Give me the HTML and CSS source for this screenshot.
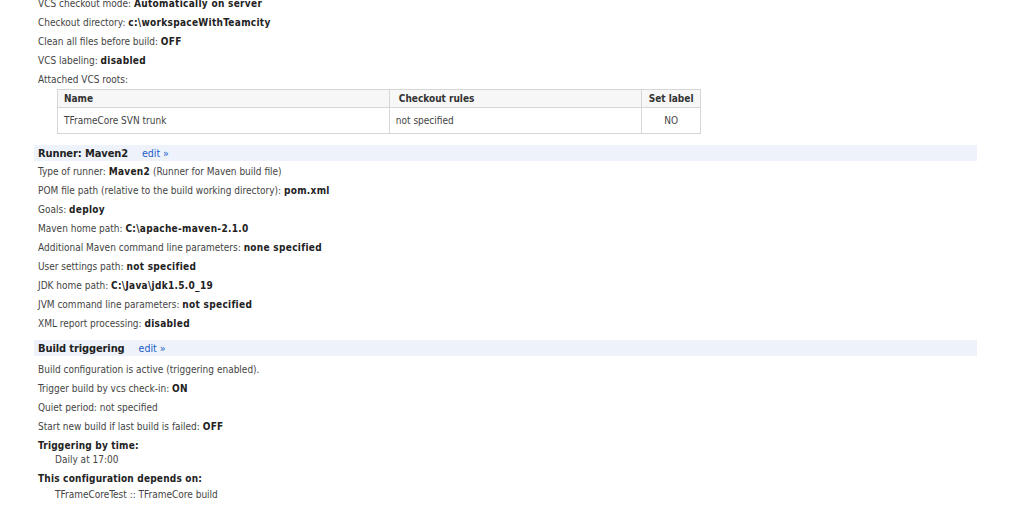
FILE: index.html
```html
<!DOCTYPE html>
<html>
<head>
<meta charset="utf-8">
<link rel="stylesheet" href="styles.css">
</head>
<body>
<div class="page">
  <div class="line">VCS checkout mode: <b>Automatically on server</b></div>
  <div class="line">Checkout directory: <b>c:\workspaceWithTeamcity</b></div>
  <div class="line">Clean all files before build: <b>OFF</b></div>
  <div class="line">VCS labeling: <b>disabled</b></div>
  <div class="line">Attached VCS roots:</div>
  <table class="roots">
    <thead>
      <tr><th class="c-name">Name</th><th class="c-rules">Checkout rules</th><th class="c-label">Set label</th></tr>
    </thead>
    <tbody>
      <tr><td>TFrameCore SVN trunk</td><td>not specified</td><td class="center">NO</td></tr>
    </tbody>
  </table>

  <div class="section runner">
    <span class="title">Runner: Maven2</span><a class="edit" href="#">edit »</a>
  </div>
  <div class="line">Type of runner: <b>Maven2</b> (Runner for Maven build file)</div>
  <div class="line">POM file path (relative to the build working directory): <b>pom.xml</b></div>
  <div class="line">Goals: <b>deploy</b></div>
  <div class="line">Maven home path: <b>C:\apache-maven-2.1.0</b></div>
  <div class="line">Additional Maven command line parameters: <b>none specified</b></div>
  <div class="line">User settings path: <b>not specified</b></div>
  <div class="line">JDK home path: <b>C:\Java\jdk1.5.0_19</b></div>
  <div class="line">JVM command line parameters: <b>not specified</b></div>
  <div class="line">XML report processing: <b>disabled</b></div>

  <div class="section triggering">
    <span class="title">Build triggering</span><a class="edit" href="#">edit »</a>
  </div>
  <div class="line">Build configuration is active (triggering enabled).</div>
  <div class="line">Trigger build by vcs check-in: <b>ON</b></div>
  <div class="line">Quiet period: not specified</div>
  <div class="line">Start new build if last build is failed: <b>OFF</b></div>
  <div class="subhead time">Triggering by time:</div>
  <div class="subitem">Daily at 17:00</div>
  <div class="subhead deps">This configuration depends on:</div>
  <div class="subitem last">TFrameCoreTest :: TFrameCore build</div>
</div>
</body>
</html>
```

FILE: styles.css
```css
html, body {
  margin: 0;
  padding: 0;
  background: #ffffff;
}

body {
  font-family: "DejaVu Sans Condensed", "DejaVu Sans", Verdana, sans-serif;
  font-stretch: condensed;
  font-size: 10px;
  color: #444444;
}

.page {
  margin: -6px 0 0 34px;
  width: 943px;
}

.line {
  height: 19px;
  line-height: 19px;
  padding-left: 4px;
  white-space: nowrap;
}

.line b {
  color: #222222;
  font-weight: bold;
  letter-spacing: 0.3px;
}

.roots {
  margin: 0 0 0 23px;
  width: 644px;
  border-collapse: collapse;
  border: 1px solid #d6d6d6;
}

.roots th {
  height: 17px;
  padding: 0 6px;
  text-align: left;
  font-weight: bold;
  color: #333333;
  background: #f7f7f7;
  border: 1px solid #d6d6d6;
}

.roots th.c-rules { padding-left: 9px; }
.roots th.c-label { text-align: center; padding: 0 3px; }

.roots td {
  height: 25px;
  padding: 0 6px;
  border: 1px solid #d6d6d6;
}

.c-name { width: 321px; }
.c-rules { width: 238px; }
.c-label { width: 52px; }

.roots td.center { text-align: center; }

.section {
  height: 16px;
  line-height: 16px;
  padding-left: 4px;
  background: #eef3fb;
  white-space: nowrap;
}

.section.runner {
  margin-top: 11px;
  margin-bottom: 1px;
}

.section.triggering {
  margin-top: 7px;
  margin-bottom: 4px;
}

.title {
  font-size: 11px;
  font-weight: bold;
  color: #222222;
  letter-spacing: -0.1px;
}

.edit {
  margin-left: 14px;
  color: #1a5cc8;
  text-decoration: none;
  font-size: 10.5px;
}

.subhead {
  line-height: 15px;
  padding-left: 4px;
  font-weight: bold;
  color: #222222;
  letter-spacing: 0.2px;
}

.subhead.time { padding-top: 2px; }
.subhead.deps { padding-top: 4px; }

.subitem {
  line-height: 14px;
  padding-left: 21px;
}

.subitem.last { line-height: 17px; }
```
